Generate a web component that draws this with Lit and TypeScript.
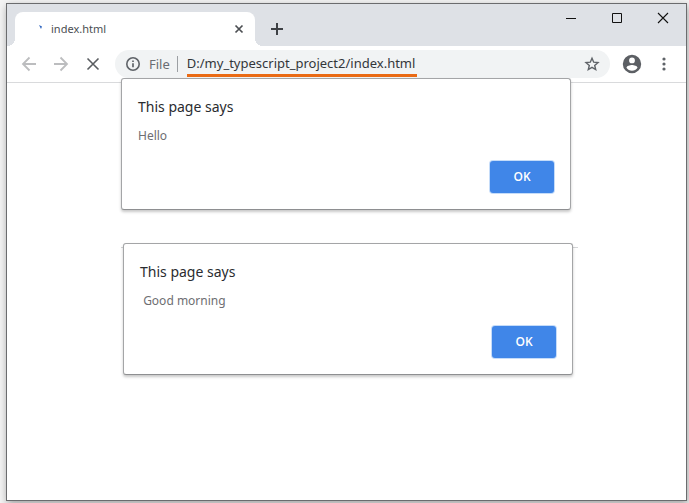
import { LitElement, html, css, svg } from "lit";
import { customElement, property } from "lit/decorators.js";

@customElement("page-dialog")
export class PageDialog extends LitElement {
  @property() heading = "This page says";
  @property() message = "";

  static styles = css`
    :host {
      display: block;
      font-family: "Noto Sans", "Open Sans", sans-serif;
    }
    .dialog {
      display: flex;
      flex-direction: column;
      box-sizing: border-box;
      min-height: 132px;
      padding: 18px 16px 16px;
      border: 1px solid #a4a5a7;
      border-bottom-color: #8e8f91;
      border-radius: 3px;
      background: #fff;
      box-shadow: 0 2px 3px rgba(0, 0, 0, 0.22);
    }
    .heading {
      margin: 0;
      font-size: 14px;
      line-height: 20px;
      font-weight: 400;
      color: #2a2c30;
    }
    .message {
      margin: 10px 0 0;
      font-size: 12px;
      line-height: 18px;
      color: #6e6e72;
      white-space: pre-wrap;
    }
    .actions {
      display: flex;
      justify-content: flex-end;
      margin-top: auto;
    }
    .ok {
      width: 64px;
      height: 32px;
      padding: 0;
      border: 0;
      border-radius: 3px;
      background: #4086e8;
      box-shadow: 0 0 0 1px #c5dcf9;
      color: #fff;
      font: 600 12px/16px "Open Sans", "Noto Sans", sans-serif;
    }
  `;

  render() {
    return html`
      <section class="dialog" role="dialog" aria-labelledby="heading">
        <h2 class="heading" id="heading">${this.heading}</h2>
        <p class="message">${this.message}</p>
        <div class="actions"><button class="ok" type="button">OK</button></div>
      </section>
    `;
  }
}

const icon = (size: number, body: unknown) => html`
  <svg width=${size} height=${size} viewBox="0 0 ${size} ${size}" fill="none" aria-hidden="true">${body}</svg>
`;

const icons = {
  spinner: icon(16, svg`<path d="M8 4l3 1.500L10 8z" fill="#2f66c0"/>`),
  tabClose: icon(16, svg`<path d="M4.500 4.500l7 7M11.500 4.500l-7 7" stroke="#4c4f53" stroke-width="1.700"/>`),
  plus: icon(16, svg`<path d="M8 2v12M2 8h12" stroke="#3e4145" stroke-width="2"/>`),
  minimize: icon(16, svg`<path d="M3 8.500h10" stroke="#111"/>`),
  maximize: icon(16, svg`<path d="M3.500 3.500h9v9h-9z" stroke="#111"/>`),
  close: icon(16, svg`<path d="M3 3l10 10M13 3L3 13" stroke="#111" stroke-width="1.100"/>`),
  back: icon(16, svg`<path d="M15 8H2.500M8.500 1.500L2 8l6.500 6.500" stroke="#bcbdbf" stroke-width="1.800"/>`),
  forward: icon(16, svg`<path d="M1 8h12.500M7.500 1.500L14 8l-6.500 6.500" stroke="#bcbdbf" stroke-width="1.800"/>`),
  stop: icon(16, svg`<path d="M2.500 2.500l11 11M13.500 2.500l-11 11" stroke="#5a5d61" stroke-width="1.600"/>`),
  info: icon(16, svg`<circle cx="8" cy="8" r="6.200" stroke="#5f6368" stroke-width="1.600"/><path d="M8 7.200v4M8 4.400v1.600" stroke="#5f6368" stroke-width="1.700"/>`),
  star: icon(16, svg`<path d="M8 2.200l1.700 4 4.300.4-3.300 2.800 1 4.200L8 11.400l-3.700 2.200 1-4.200L2 6.600l4.300-.4z" stroke="#5f6368" stroke-width="1.400"/>`),
  person: icon(20, svg`<path fill-rule="evenodd" d="M10 .8a9.200 9.200 0 1 0 0 18.400A9.200 9.200 0 0 0 10 .8zm0 2.700a2.900 2.900 0 1 1 0 5.800 2.900 2.900 0 0 1 0-5.800zm0 13.200a6.600 6.600 0 0 1-5.500-3c0-1.800 3.700-2.800 5.500-2.800s5.500 1 5.500 2.800a6.600 6.600 0 0 1-5.500 3z" fill="#5c5f64"/>`),
  menu: icon(16, svg`<g fill="#5f6368"><circle cx="8" cy="3" r="1.600"/><circle cx="8" cy="8" r="1.600"/><circle cx="8" cy="13" r="1.600"/></g>`),
};

@customElement("app-root")
export class AppRoot extends LitElement {
  static styles = css`
    :host {
      display: flex;
      box-sizing: border-box;
      min-height: 100vh;
      padding: 3px 2px 2px 6px;
      overflow: hidden;
      background: #f4f4f4;
      font-family: "Noto Sans", "Open Sans", sans-serif;
    }
    .window {
      flex: 1;
      min-width: 0;
      border: 1px solid #6b6c6e;
      background: #fff;
      box-shadow: 1px 3px 8px rgba(0, 0, 0, 0.35);
    }
    .strip {
      display: flex;
      align-items: flex-end;
      height: 42px;
      padding-left: 8px;
      background: #dee1e6;
    }
    button {
      display: grid;
      place-items: center;
      flex: none;
      padding: 0;
      border: 0;
      background: none;
    }
    svg {
      display: block;
    }
    .tab {
      position: relative;
      display: flex;
      align-items: center;
      box-sizing: border-box;
      width: 240px;
      height: 34px;
      padding: 0 8px 0 16px;
      border-radius: 8px 8px 0 0;
      background: #fff;
    }
    .tab::before,
    .tab::after {
      content: "";
      position: absolute;
      bottom: 0;
      width: 8px;
      height: 8px;
    }
    .tab::before {
      right: 100%;
      background: radial-gradient(circle at 0 0, #dee1e6 8px, #fff 8px);
    }
    .tab::after {
      left: 100%;
      background: radial-gradient(circle at 100% 0, #dee1e6 8px, #fff 8px);
    }
    .title {
      flex: 1;
      margin-left: 4px;
      font-size: 11px;
      line-height: 16px;
      color: #4b4e52;
    }
    .small {
      width: 16px;
      height: 16px;
    }
    .new {
      width: 28px;
      height: 34px;
      margin-left: 8px;
    }
    .controls {
      display: flex;
      align-self: flex-start;
      margin-left: auto;
    }
    .controls button {
      width: 46px;
      height: 28px;
    }
    .toolbar {
      display: flex;
      align-items: center;
      height: 36px;
      padding: 0 6px;
      border-bottom: 1px solid #d9dadc;
    }
    .nav {
      width: 32px;
      height: 32px;
    }
    .address {
      display: flex;
      align-items: center;
      flex: 1;
      min-width: 0;
      height: 28px;
      margin: 0 6px;
      padding: 0 10px;
      border-radius: 14px;
      background: #f1f3f4;
      font-size: 13px;
      line-height: 18px;
    }
    .scheme {
      margin-left: 8px;
      padding-right: 7px;
      color: #6a6d72;
    }
    .rule {
      width: 1px;
      height: 16px;
      background: #9c9fa3;
    }
    .field {
      display: flex;
      flex: 1;
      min-width: 0;
      align-self: stretch;
      margin-left: 9px;
    }
    .url {
      field-sizing: content;
      box-sizing: border-box;
      max-width: 100%;
      height: 27px;
      padding: 2px 2px 0 0;
      border: 0;
      border-bottom: 3px solid #ea6a14;
      border-radius: 0;
      outline: 0;
      background: none;
      color: #33363a;
      font: 13px/18px "Noto Sans", "Open Sans", sans-serif;
    }
    .page {
      display: flex;
      flex-direction: column;
      gap: 33px;
      margin-top: -5px;
      padding: 0 113px 0 114px;
    }
    page-dialog {
      position: relative;
      width: 100%;
      max-width: 450px;
    }
    .second {
      position: relative;
      display: flex;
      justify-content: flex-end;
    }
    .second::before {
      content: "";
      position: absolute;
      top: 4px;
      left: 0;
      right: -5px;
      height: 1px;
      background: #d4d5d7;
    }
  `;

  render() {
    return html`
      <div class="window">
        <header>
          <div class="strip">
            <div class="tab">
              ${icons.spinner}
              <span class="title">index.html</span>
              <button class="small" aria-label="Close tab">${icons.tabClose}</button>
            </div>
            <button class="new" aria-label="New tab">${icons.plus}</button>
            <div class="controls">
              <button aria-label="Minimize">${icons.minimize}</button>
              <button aria-label="Maximize">${icons.maximize}</button>
              <button aria-label="Close">${icons.close}</button>
            </div>
          </div>
          <nav class="toolbar">
            <button class="nav" aria-label="Back">${icons.back}</button>
            <button class="nav" aria-label="Forward">${icons.forward}</button>
            <button class="nav" aria-label="Stop">${icons.stop}</button>
            <div class="address">
              ${icons.info}
              <label class="scheme" for="url">File</label>
              <span class="rule"></span>
              <div class="field">
                <input class="url" id="url" type="text" spellcheck="false" value="D:/my_typescript_project2/index.html" />
              </div>
              <button class="small" aria-label="Bookmark">${icons.star}</button>
            </div>
            <button class="nav" aria-label="Profile">${icons.person}</button>
            <button class="nav" aria-label="Menu">${icons.menu}</button>
          </nav>
        </header>
        <main class="page">
          <page-dialog message="Hello"></page-dialog>
          <div class="second"><page-dialog message=" Good morning"></page-dialog></div>
        </main>
      </div>
    `;
  }
}
